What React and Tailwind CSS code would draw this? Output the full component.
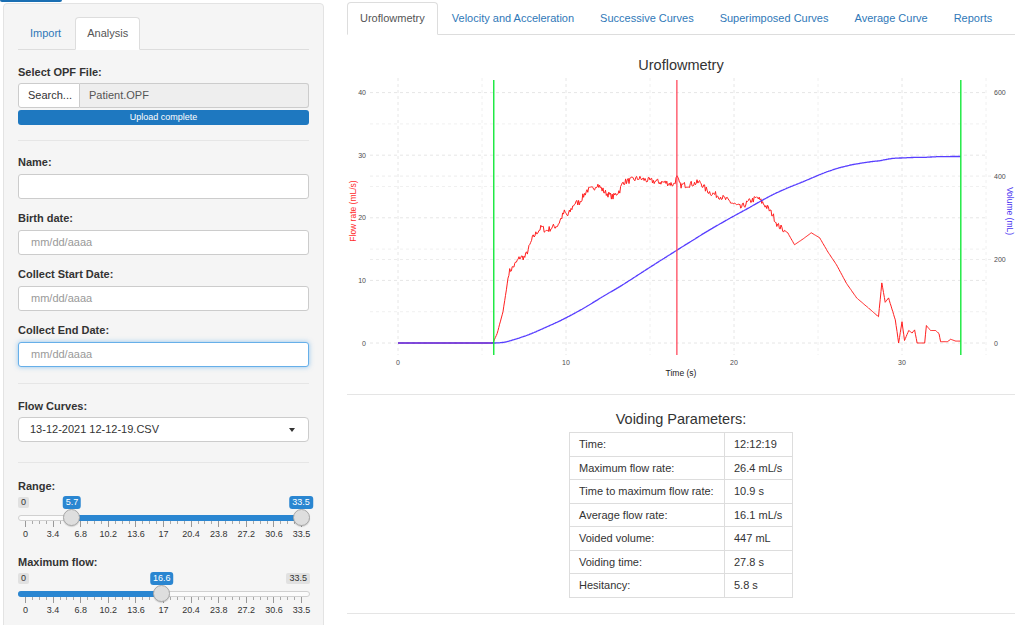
import React from "react";

// flow keypoints read off the uroflowmetry trace: [time s, flow mL/s]
const KEYS = [
  [0, 0], [5.65, 0], [5.9, 1.5], [6.25, 5], [6.45, 8.5], [6.6, 11.3], [6.9, 12.3],
  [7.26, 13.7], [7.56, 13.7], [7.8, 15.2], [8.0, 16.7], [8.3, 17.8], [8.55, 18.5],
  [8.8, 17.9], [9.2, 18.5], [9.5, 18.8], [9.9, 20.9], [10.1, 20.3], [10.5, 22.3],
  [10.8, 22.5], [11.25, 24.4], [11.6, 24.6], [11.85, 25.4], [12.3, 24.1], [12.8, 23.3],
  [13.2, 24.4], [13.4, 25.7], [14.0, 26.1], [14.3, 26.3], [15, 25.9], [16, 25.6],
  [16.4, 25.3], [16.6, 26.4], [16.8, 25.2], [17.3, 25.3], [18.0, 25.7], [18.3, 24.6],
  [18.6, 24], [19.2, 23.4], [19.8, 22.5], [20.4, 21.6], [20.9, 22.6], [21.4, 23.2],
  [22, 21.6], [22.3, 20.5], [22.6, 18.8], [23.2, 17.6], [23.6, 15.7], [24.1, 16.6],
  [24.6, 17.6], [25.1, 16.8], [25.6, 14.5], [26.1, 12.5], [26.7, 9.5], [27.3, 7.2],
  [28.0, 5.6], [28.6, 4.2], [28.8, 9.6], [29.0, 6.5], [29.2, 7.2], [29.6, 3.7],
  [29.8, 0], [30.0, 3.4], [30.15, 0.4], [30.4, 2], [30.6, 1.6], [30.75, 2.1],
  [30.9, 0], [31.35, 0], [31.45, 2.8], [31.7, 2.0], [32.0, 2.0], [32.2, 1.5],
  [32.3, 0.2], [32.7, 0.2], [32.9, 0.6], [33.2, 0.3], [33.5, 0.3],
];

const tx = (t) => 398 + t * 16.8;
const fy = (f) => 343 - f * 6.26;

const rng = (seed) => {
  let s = seed;
  return () => {
    s = (s * 16807) % 2147483647;
    return (s - 1) / 2147483646;
  };
};

const buildSeries = () => {
  const rand = rng(7);
  const flow = [];
  let k = 0;
  for (let i = 0; i <= 670; i++) {
    const t = i * 0.05;
    while (k < KEYS.length - 2 && KEYS[k + 1][0] < t) k++;
    const [t1, f1] = KEYS[k];
    const [t2, f2] = KEYS[k + 1];
    let f = f1 + (f2 - f1) * Math.min(1, Math.max(0, (t - t1) / (t2 - t1)));
    if (t > 6.6 && t < 23) f += (rand() - 0.5) * 1.0;
    flow.push([t, Math.max(0, f)]);
  }
  // volume = running integral of the flow, scaled to the voided 447 mL
  let sum = 0;
  const cum = flow.map(([t, f]) => {
    sum += f * 0.05;
    return [t, sum];
  });
  const vol = cum.map(([t, v]) => [t, (v / sum) * 447]);
  return { flow, vol };
};

const toPath = (pts, scale = 1) =>
  pts.map(([t, v], i) => `${i ? "L" : "M"}${tx(t).toFixed(1)} ${fy(v / scale).toFixed(1)}`).join(" ");

function FlowChart() {
  const { flow, vol } = buildSeries();
  const gridT = [0, 5, 10, 15, 20, 25, 30, 35];
  const gridF = [0, 5, 10, 15, 20, 25, 30, 35, 40];
  return (
    <svg width="668" height="359" viewBox="347 35 668 359" className="block" fontFamily="'Liberation Sans', Arial, sans-serif">
      <text x="681" y="70" textAnchor="middle" fontSize="14.5" fill="#333">Uroflowmetry</text>

      {gridF.map((f) => (
        <line key={"f" + f} x1="370" x2="988" y1={fy(f)} y2={fy(f)} stroke={f % 10 ? "#f0f0f0" : "#e6e6e6"} strokeDasharray="3 3" />
      ))}
      {[200, 400].map((v) => (
        <line key={"v" + v} x1="370" x2="992" y1={fy(v / 15)} y2={fy(v / 15)} stroke="#ececec" strokeDasharray="3 3" />
      ))}
      {gridT.map((t) => (
        <line key={"t" + t} x1={tx(t)} x2={tx(t)} y1="78" y2="355" stroke={t % 10 ? "#f0f0f0" : "#e6e6e6"} strokeDasharray="3 3" />
      ))}

      {[0, 10, 20, 30, 40].map((f) => (
        <text key={f} x="366" y={fy(f) + 2.5} textAnchor="end" fontSize="7" fill="#4d4d4d">{f}</text>
      ))}
      {[0, 200, 400, 600].map((v) => (
        <text key={v} x="994" y={fy(v / 15) + 2.5} fontSize="7" fill="#4d4d4d">{v}</text>
      ))}
      {[0, 10, 20, 30].map((t) => (
        <text key={t} x={tx(t)} y="365" textAnchor="middle" fontSize="7" fill="#4d4d4d">{t}</text>
      ))}

      <text x="681" y="376" textAnchor="middle" fontSize="8.5" fill="#222">Time (s)</text>
      <text transform="translate(356 211) rotate(-90)" textAnchor="middle" fontSize="8.5" fill="#ff2b2b">Flow rate (mL/s)</text>
      <text transform="translate(1007 211) rotate(90)" textAnchor="middle" fontSize="8.5" fill="#4b35f2">Volume (mL)</text>

      <path d={toPath(flow)} fill="none" stroke="#ff1f1f" strokeWidth="1" strokeLinejoin="round" />
      <path d={toPath(vol, 15)} fill="none" stroke="#3a1cff" strokeOpacity="0.85" strokeWidth="1.3" strokeLinejoin="round" />

      <line x1={tx(5.7)} x2={tx(5.7)} y1="80" y2="355" stroke="#14e83a" strokeWidth="1.4" />
      <line x1={tx(33.5)} x2={tx(33.5)} y1="80" y2="355" stroke="#14e83a" strokeWidth="1.4" />
      <line x1={tx(16.6)} x2={tx(16.6)} y1="80" y2="355" stroke="#ff3b50" strokeWidth="1.2" />
    </svg>
  );
}

const GRID = ["0", "3.4", "6.8", "10.2", "13.6", "17", "20.4", "23.8", "27.2", "30.6", "33.5"];
const sx = (v) => 7 + (v / 33.5) * 276;

function Slider({ from, to }) {
  const a = to == null ? 0 : sx(from);
  const b = to == null ? sx(from) : sx(to);
  const handles = to == null ? [from] : [from, to];
  return (
    <div className="relative mt-[2px] h-[46px] w-[292px]">
      <span className="absolute left-0 top-[1px] rounded-[2px] bg-[#e1e1e1] px-[3px] text-[9px] leading-[11px] text-[#333]">0</span>
      {to == null && (
        <span className="absolute right-0 top-[1px] rounded-[2px] bg-[#e1e1e1] px-[3px] text-[9px] leading-[11px] text-[#333]">33.5</span>
      )}
      <div className="absolute left-0 right-0 top-[19px] h-[6px] rounded-full border border-[#d0d0d0] bg-[#fbfbfb]" />
      <div
        className={`absolute top-[19px] h-[6px] bg-[#2a86d1] ${to == null ? "rounded-l-full" : ""}`}
        style={{ left: a, width: b - a }}
      />
      {GRID.map((g, i) => {
        const p = 7 + i * 27.6;
        return (
          <React.Fragment key={g}>
            <div className="absolute top-[25px] h-[6px] w-px bg-[#999]" style={{ left: p }} />
            {i < 10 &&
              [1, 2, 3].map((j) => (
                <div key={j} className="absolute top-[25px] h-[3px] w-px bg-[#aaa]" style={{ left: p + j * 6.9 }} />
              ))}
            <span className="absolute top-[33px] -translate-x-1/2 text-[9px] leading-[11px] text-[#333]" style={{ left: p + 0.5 }}>
              {g}
            </span>
          </React.Fragment>
        );
      })}
      {handles.map((v) => (
        <React.Fragment key={v}>
          <div
            className="absolute top-[13px] h-[17px] w-[17px] rounded-full border border-[#a8a8a8] bg-[#dedede] shadow-[0_1px_1px_rgba(0,0,0,0.15)]"
            style={{ left: sx(v) - 8.5 }}
          />
          <span
            className="absolute top-0 -translate-x-1/2 rounded-[3px] bg-[#2a86d1] px-[3px] text-[9px] leading-[13px] text-white"
            style={{ left: sx(v) }}
          >
            {v}
          </span>
        </React.Fragment>
      ))}
    </div>
  );
}

const Label = ({ children, className = "" }) => (
  <div className={`text-[11px] font-bold leading-[16px] text-[#333] ${className}`}>{children}</div>
);

const DateInput = ({ focused }) => (
  <div
    className={`mt-[4px] flex h-[25px] items-center rounded-[3px] border bg-white pl-[12px] text-[11px] text-[#999] ${
      focused ? "border-[#66afe9] shadow-[0_0_5px_rgba(102,175,233,0.7)]" : "border-[#ccc]"
    }`}
  >
    mm/dd/aaaa
  </div>
);

const PARAMS = [
  ["Time:", "12:12:19"],
  ["Maximum flow rate:", "26.4 mL/s"],
  ["Time to maximum flow rate:", "10.9 s"],
  ["Average flow rate:", "16.1 mL/s"],
  ["Voided volume:", "447 mL"],
  ["Voiding time:", "27.8 s"],
  ["Hesitancy:", "5.8 s"],
];

const TABS = ["Uroflowmetry", "Velocity and Acceleration", "Successive Curves", "Superimposed Curves", "Average Curve", "Reports"];

export default function App() {
  return (
    <div className="flex h-[625px] w-[1020px] overflow-hidden bg-white font-['Liberation_Sans',Arial,sans-serif] text-[#333]">
      {/* sidebar */}
      <div className="w-[324px] shrink-0 pl-[3px]">
        <div className="-ml-[3px] h-[2px] w-[62px] rounded-b-[2px] bg-[#1a6fb3]" />
        <div className="mt-px h-[700px] w-[321px] rounded-[4px] border border-[#e3e3e3] bg-[#f5f5f5] px-[14px] pt-[13px]">
          <ul className="flex border-b border-[#ddd] text-[11px] leading-[17px]">
            <li className="-mb-px mr-[2px] border border-transparent px-[11px] py-[7px] text-[#2f78b8]">Import</li>
            <li className="-mb-px rounded-t-[4px] border border-[#ddd] border-b-white bg-white px-[11px] py-[7px] text-[#555]">Analysis</li>
          </ul>

          <Label className="mt-[14px]">Select OPF File:</Label>
          <div className="mt-[3px] flex h-[25px] text-[11px]">
            <div className="flex w-[62px] items-center rounded-l-[3px] border border-[#ccc] bg-white pl-[9px] text-[#333]">Search...</div>
            <div className="flex flex-1 items-center rounded-r-[3px] border border-l-0 border-[#ccc] bg-[#eee] pl-[9px] text-[#555]">Patient.OPF</div>
          </div>
          <div className="mt-[2px] flex h-[15px] items-center justify-center rounded-[3px] bg-[#1e78c0] text-[9px] text-white">Upload complete</div>

          <div className="mt-[15px] border-t border-[#e6e6e6]" />

          <Label className="mt-[13px]">Name:</Label>
          <div className="mt-[4px] h-[25px] rounded-[3px] border border-[#ccc] bg-white" />
          <Label className="mt-[11px]">Birth date:</Label>
          <DateInput />
          <Label className="mt-[11px]">Collect Start Date:</Label>
          <DateInput />
          <Label className="mt-[11px]">Collect End Date:</Label>
          <DateInput focused />

          <div className="mt-[16px] border-t border-[#e6e6e6]" />

          <Label className="mt-[14px]">Flow Curves:</Label>
          <div className="mt-[3px] flex h-[25px] items-center justify-between rounded-[4px] border border-[#ccc] bg-white pl-[11px] pr-[13px] text-[11px] text-[#333]">
            <span>13-12-2021 12-12-19.CSV</span>
            <span className="h-0 w-0 border-x-[3.5px] border-t-[4px] border-x-transparent border-t-[#333]" />
          </div>

          <div className="mt-[20px] border-t border-[#e6e6e6]" />

          <Label className="mt-[15px]">Range:</Label>
          <Slider from={5.7} to={33.5} />
          <Label className="mt-[12px]">Maximum flow:</Label>
          <Slider from={16.6} />
        </div>
      </div>

      {/* main */}
      <div className="ml-[23px] w-[668px] shrink-0 pt-[2px]">
        <ul className="flex flex-nowrap border-b border-[#ddd] text-[11px] leading-[17px]">
          {TABS.map((t, i) => (
            <li
              key={t}
              className={
                i === 0
                  ? "-mb-px mr-[2px] shrink-0 whitespace-nowrap rounded-t-[4px] border border-[#ddd] border-b-white bg-white px-[12px] py-[7px] text-[#555]"
                  : "-mb-px mr-[2px] shrink-0 whitespace-nowrap border border-transparent px-[11px] py-[7px] text-[#2f78b8]"
              }
            >
              {t}
            </li>
          ))}
        </ul>

        <FlowChart />

        <div className="border-t border-[#e5e5e5]" />
        <h4 className="mt-[14px] text-center text-[14.5px] leading-[20px] text-[#333]">Voiding Parameters:</h4>
        <table className="mx-auto mt-[3px] border-collapse text-[11px] text-[#333]">
          <tbody>
            {PARAMS.map(([k, v]) => (
              <tr key={k} className="h-[23.5px]">
                <td className="w-[155px] border border-[#ddd] px-[9px]">{k}</td>
                <td className="w-[68px] border border-[#ddd] px-[9px]">{v}</td>
              </tr>
            ))}
          </tbody>
        </table>
        <div className="mt-[15px] border-t border-[#e5e5e5]" />
      </div>
    </div>
  );
}
